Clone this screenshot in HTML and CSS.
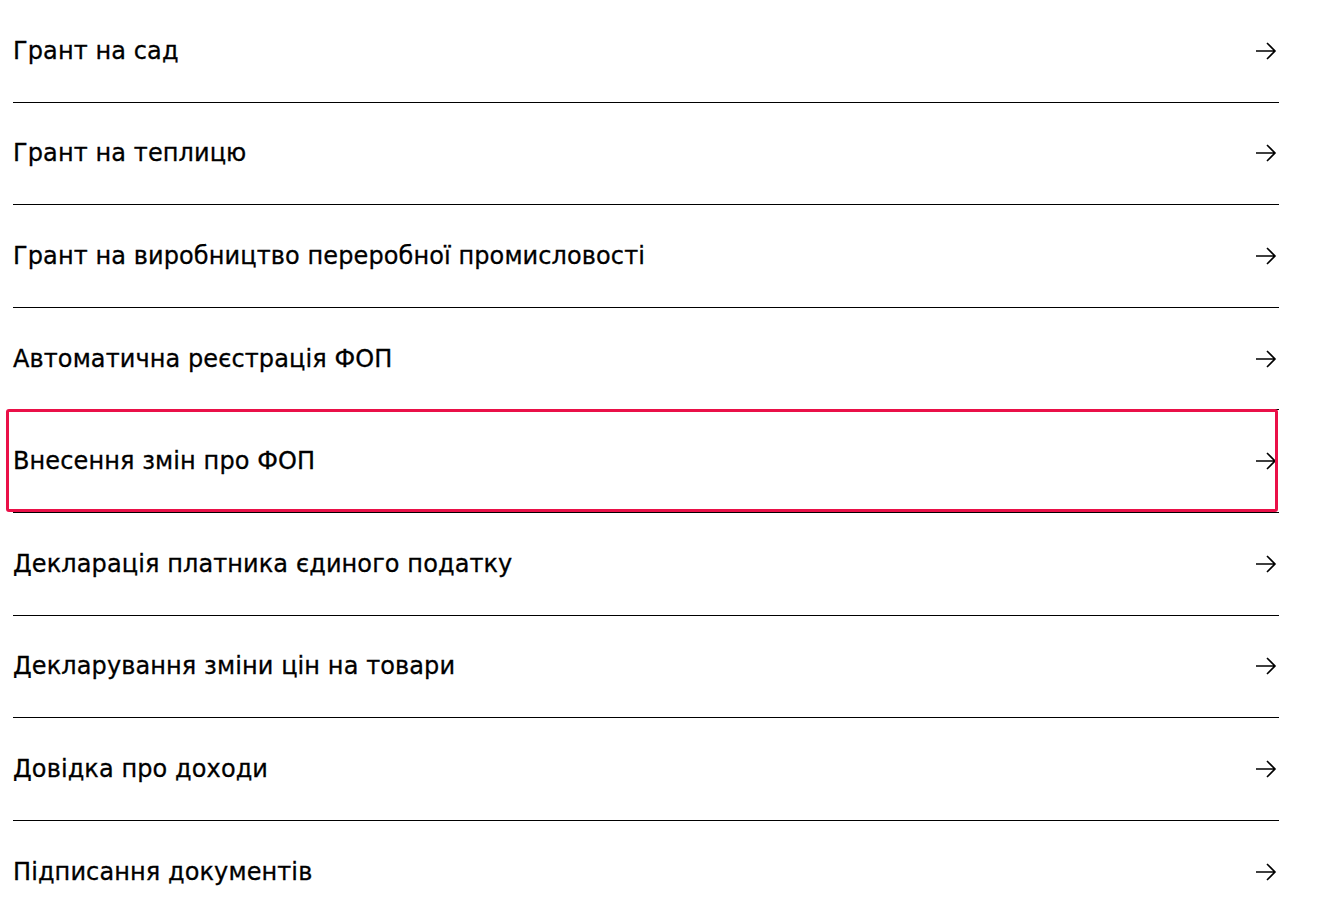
FILE: index.html
```html
<!DOCTYPE html>
<html lang="uk">
<head>
    <meta charset="UTF-8">
    <meta name="viewport" content="width=device-width, initial-scale=1.0">
    <title>Послуги</title>
    <link rel="stylesheet" href="styles.css">
</head>
<body>
    <ul class="services">
        <li class="service"><a href="#" class="service-link"><span>Грант на сад</span><svg class="arrow" viewBox="0 0 22 20"><path d="M1 10H20M12 2L20 10L12 18"/></svg></a></li>
        <li class="service"><a href="#" class="service-link"><span>Грант на теплицю</span><svg class="arrow" viewBox="0 0 22 20"><path d="M1 10H20M12 2L20 10L12 18"/></svg></a></li>
        <li class="service"><a href="#" class="service-link"><span>Грант на виробництво переробної промисловості</span><svg class="arrow" viewBox="0 0 22 20"><path d="M1 10H20M12 2L20 10L12 18"/></svg></a></li>
        <li class="service"><a href="#" class="service-link"><span>Автоматична реєстрація ФОП</span><svg class="arrow" viewBox="0 0 22 20"><path d="M1 10H20M12 2L20 10L12 18"/></svg></a></li>
        <li class="service focused"><a href="#" class="service-link"><span>Внесення змін про ФОП</span><svg class="arrow" viewBox="0 0 22 20"><path d="M1 10H20M12 2L20 10L12 18"/></svg></a></li>
        <li class="service"><a href="#" class="service-link"><span>Декларація платника єдиного податку</span><svg class="arrow" viewBox="0 0 22 20"><path d="M1 10H20M12 2L20 10L12 18"/></svg></a></li>
        <li class="service"><a href="#" class="service-link"><span>Декларування зміни цін на товари</span><svg class="arrow" viewBox="0 0 22 20"><path d="M1 10H20M12 2L20 10L12 18"/></svg></a></li>
        <li class="service"><a href="#" class="service-link"><span>Довідка про доходи</span><svg class="arrow" viewBox="0 0 22 20"><path d="M1 10H20M12 2L20 10L12 18"/></svg></a></li>
        <li class="service"><a href="#" class="service-link"><span>Підписання документів</span><svg class="arrow" viewBox="0 0 22 20"><path d="M1 10H20M12 2L20 10L12 18"/></svg></a></li>
    </ul>
</body>
</html>
```

FILE: styles.css
```css
body {
    font-family: "DejaVu Sans", "Liberation Sans", sans-serif;
    margin: 0;
    background-color: #fff;
    color: #000;
    overflow: hidden;
}
.services {
    list-style: none;
    margin: 0 48px 0 13px;
    padding: 0;
}
.service {
    position: relative;
    border-bottom: 1px solid #000;
}
.service-link {
    display: flex;
    align-items: center;
    justify-content: space-between;
    height: 101.6px;
    color: #000;
    text-decoration: none;
    font-size: 24px;
    letter-spacing: 0.1px;
    -webkit-text-stroke: 0.3px #000;
}
.arrow {
    width: 22px;
    height: 20px;
    margin-right: 2px;
    fill: none;
    stroke: #000;
    stroke-width: 1.6;
}
.focused::after {
    content: "";
    position: absolute;
    top: -1px;
    left: -7px;
    right: 1px;
    bottom: 0;
    border: 3px solid #ea1048;
    border-radius: 3px;
    pointer-events: none;
}
```
